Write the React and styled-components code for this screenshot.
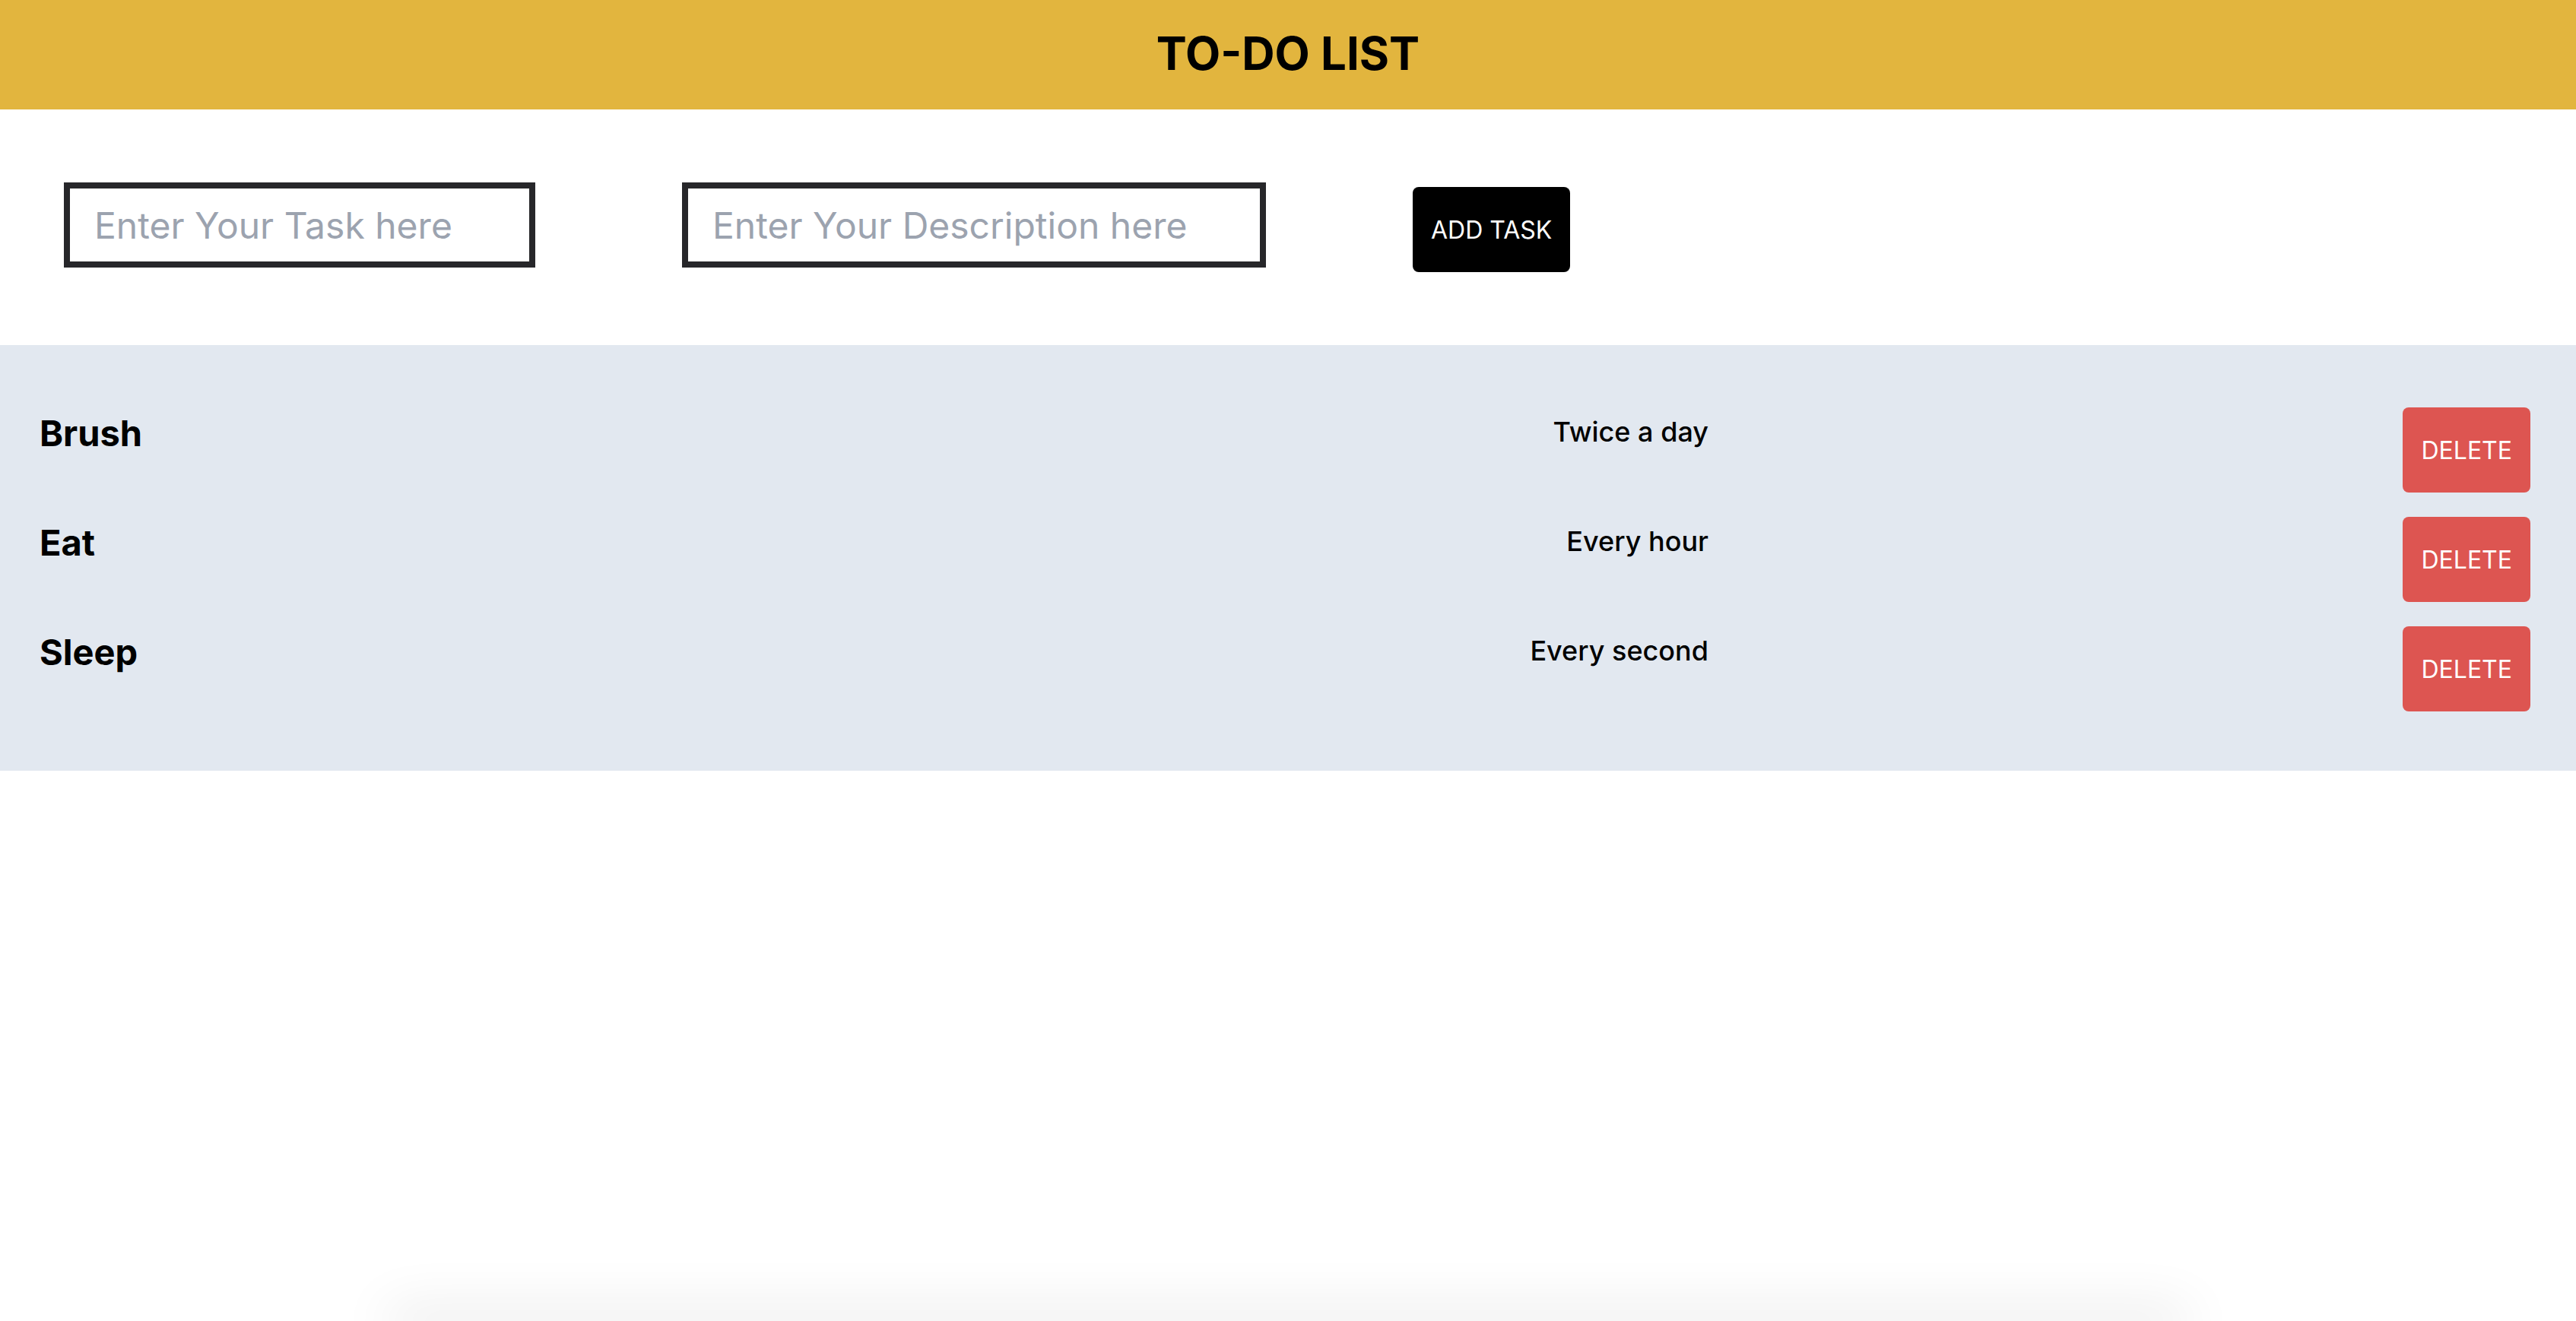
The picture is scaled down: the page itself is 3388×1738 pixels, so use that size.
import React from "react";
import styled, { createGlobalStyle } from "styled-components";

const GlobalStyle = createGlobalStyle`
  html, body { margin: 0; padding: 0; background: #ffffff; }
  body { font-family: Inter, "Noto Sans", sans-serif; color: #000; }
  * { box-sizing: border-box; }
`;

const Page = styled.div`
  display: flex;
  flex-direction: column;
  height: 100vh;
  overflow: hidden;
  background: #ffffff;
`;

const Header = styled.header`
  flex-shrink: 0;
  height: 144px;
  background: #e2b53e;
  display: flex;
  align-items: center;
  justify-content: center;
`;

const Title = styled.h1`
  margin: 0;
  font-family: Inter, sans-serif;
  font-size: 60px;
  line-height: 72px;
  font-weight: 700;
  color: #000;
  padding-bottom: 4px;
`;

const Form = styled.form`
  flex-shrink: 0;
  display: flex;
  align-items: flex-start;
  gap: 193px;
  padding: 96px 84px;
`;

const TextInput = styled.input`
  width: ${(p) => p.$w}px;
  height: 112px;
  border: 8px solid #27272a;
  border-radius: 0;
  padding: 0 32px;
  font-family: Inter, sans-serif;
  font-size: 48px;
  color: #111;
  background: #fff;
  outline: none;
  &::placeholder { color: #9ca3af; }
`;

const Button = styled.button`
  height: 112px;
  padding: 0 ${(p) => p.$px}px;
  border: none;
  border-radius: 8px;
  background: ${(p) => p.$bg};
  color: #fff;
  font-family: Inter, sans-serif;
  font-size: 32px;
  font-weight: 400;
  margin-top: ${(p) => p.$mt || 0}px;
  cursor: pointer;
`;

const List = styled.section`
  flex-shrink: 0;
  background: #e2e8f0;
  padding: 82px 60px 78px 52px;
  display: flex;
  flex-direction: column;
  gap: 32px;
`;

const Row = styled.div`
  display: grid;
  grid-template-columns: 2195px 1fr;
  align-items: flex-start;
`;

const Info = styled.div`
  display: flex;
  justify-content: space-between;
  align-items: flex-start;
`;

const TaskName = styled.h2`
  margin: 0;
  font-size: 47px;
  line-height: 64px;
  font-weight: 700;
  color: #000;
  padding-top: 2px;
`;

const TaskDesc = styled.p`
  margin: 0;
  font-size: 36px;
  line-height: 56px;
  font-weight: 500;
  color: #000;
  padding-top: 4px;
`;

const Actions = styled.div`
  display: flex;
  justify-content: flex-end;
`;

const Spacer = styled.div`
  flex: 1;
`;

const FooterEdge = styled.div`
  flex-shrink: 0;
  height: 0;
  width: 2340px;
  margin: 0 auto;
  box-shadow: 0 0 70px 14px rgba(0, 0, 0, 0.12);
`;

const tasks = [
  { name: "Brush", desc: "Twice a day" },
  { name: "Eat", desc: "Every hour" },
  { name: "Sleep", desc: "Every second" },
];

export default function App() {
  return (
    <>
      <GlobalStyle />
      <Page>
        <Header>
          <Title>TO-DO LIST</Title>
        </Header>
        <Form onSubmit={(e) => e.preventDefault()}>
          <TextInput $w={620} placeholder="Enter Your Task here" />
          <TextInput $w={768} placeholder="Enter Your Description here" />
          <Button type="submit" $bg="#000000" $px={24} $mt={6}>
            ADD TASK
          </Button>
        </Form>
        <List>
          {tasks.map((t) => (
            <Row key={t.name}>
              <Info>
                <TaskName>{t.name}</TaskName>
                <TaskDesc>{t.desc}</TaskDesc>
              </Info>
              <Actions>
                <Button type="button" $bg="#dd5551" $px={24}>
                  DELETE
                </Button>
              </Actions>
            </Row>
          ))}
        </List>
        <Spacer />
        <FooterEdge />
      </Page>
    </>
  );
}
